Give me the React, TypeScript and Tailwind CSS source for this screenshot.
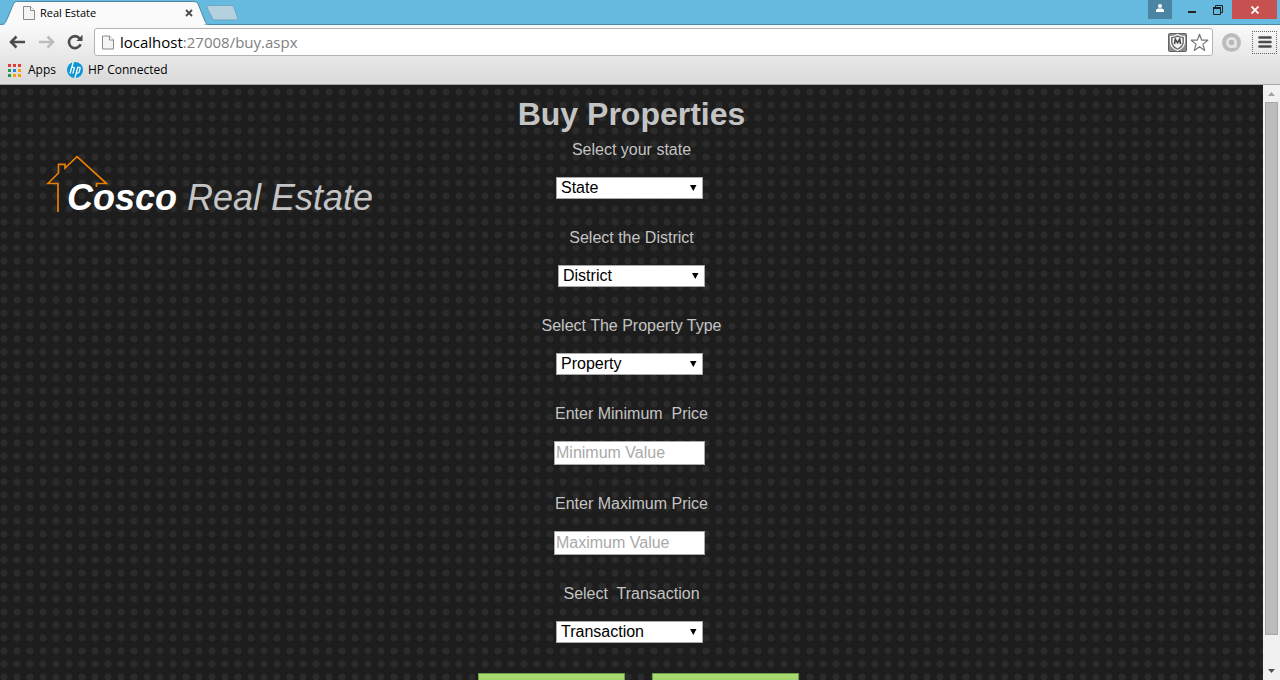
import type { ReactNode } from "react";

const uiFont = "font-['Open_Sans','Noto_Sans',sans-serif]";
const pageFont = "font-['Liberation_Sans',Arial,sans-serif]";

function PageIcon({ className }: { className: string }) {
  return (
    <svg className={className} viewBox="0 0 12 14" fill="none" aria-hidden="true">
      <path d="M1 .5h6.5l4 4v9H.5V.5z" fill="#f4f4f4" stroke="#8a8a8a" />
      <path d="M7.5.5v4h4" fill="#fff" stroke="#8a8a8a" />
    </svg>
  );
}

function TabStrip() {
  return (
    <div className="flex h-[25px] shrink-0 items-start border-b border-[#4d89a6] bg-[#66b9df]">
      <div className="relative h-[25px] w-[208px] shrink-0">
        <svg className="absolute inset-0 h-[25px] w-[208px]" viewBox="0 0 208 25" aria-hidden="true">
          <path
            d="M0 25V24.5C4 24.5 5.500 23 6.500 20.500L13 5C14 2 15.500 1.500 18 1.500H193C196 1.500 197.500 2.500 198.500 5L205 21C206 23.500 206.500 24.500 208 24.500V25z"
            fill="#fafafa"
            stroke="#4d89a6"
          />
          <path d="M5 24.500H204" stroke="#fafafa" strokeWidth="2" />
        </svg>
        <div className="relative flex h-[25px] items-center pr-3.5 pl-[23px]">
          <PageIcon className="h-3.5 w-3" />
          <span className="ml-[5px] flex-1 text-[11px] leading-4 text-black">Real Estate</span>
          <button type="button" aria-label="Close tab" className="flex size-2.5 items-center justify-center">
            <svg className="size-2" viewBox="0 0 8 8" aria-hidden="true">
              <path d="M1 1l6 6M7 1L1 7" stroke="#4c4c4c" strokeWidth="1.8" />
            </svg>
          </button>
        </div>
      </div>
      <button type="button" aria-label="New tab" className="mt-[5px] -ml-[2px]">
        <svg className="h-4 w-8" viewBox="0 0 32 16" aria-hidden="true">
          <path
            d="M3 .5H25C26.500 .5 27.300 1 28 2.500L31.300 12C31.800 14 31.500 15 30 15H10C8 15 7 14.500 6 12.500L1.200 3C.6 1.500 1 .5 3 .5z"
            fill="#b5d0df"
            stroke="#6fa6c1"
          />
        </svg>
      </button>
      <div className="ml-auto flex h-[19px] items-stretch pr-[3px]">
        <button type="button" aria-label="Profile" className="flex w-6 items-center justify-center bg-[#4a86a3]">
          <svg className="-mt-1 h-2 w-2" viewBox="0 0 8 8" aria-hidden="true">
            <circle cx="4" cy="2" r="2" fill="#fff" />
            <path d="M0 8V6.500C0 5 1.500 4.500 4 4.500S8 5 8 6.500V8z" fill="#fff" />
          </svg>
        </button>
        <button type="button" aria-label="Minimize" className="ml-2 flex w-6 items-center justify-center">
          <svg className="h-[19px] w-2" viewBox="0 0 8 19" aria-hidden="true">
            <path d="M0 11h8v2H0z" fill="#222" />
          </svg>
        </button>
        <button type="button" aria-label="Restore" className="ml-0.5 flex w-6 items-center justify-center">
          <svg className="size-2.5" viewBox="0 0 10 10" fill="none" aria-hidden="true">
            <path d="M2.500 2V.5h7v7H8" stroke="#222" />
            <path d="M.5 2.500h7v7h-7z" stroke="#222" />
            <path d="M0 3h8" stroke="#222" strokeWidth="2" />
          </svg>
        </button>
        <button type="button" aria-label="Close" className="ml-0.5 flex w-[45px] items-center justify-center bg-[#c75050]">
          <svg className="size-2" viewBox="0 0 8 8" aria-hidden="true">
            <path d="M.5 .5l7 7M7.500 .5l-7 7" stroke="#fff" strokeWidth="1.8" />
          </svg>
        </button>
      </div>
    </div>
  );
}

function Toolbar() {
  return (
    <div className="flex h-[34px] items-center pr-[3px] pl-[9px]">
      <button type="button" aria-label="Back">
        <svg className="h-4 w-4" viewBox="0 0 16 16" fill="none" aria-hidden="true">
          <path d="M2 8H16M7.500 2.500L2 8l5.500 5.500" stroke="#4c4c4c" strokeWidth="2.600" />
        </svg>
      </button>
      <button type="button" aria-label="Forward" className="ml-3.5">
        <svg className="h-4 w-4" viewBox="0 0 16 16" fill="none" aria-hidden="true">
          <path d="M0 8H14M8.500 2.500L14 8l-5.500 5.500" stroke="#bdbdbd" strokeWidth="2.600" />
        </svg>
      </button>
      <button type="button" aria-label="Reload" className="ml-3">
        <svg className="h-4 w-4" viewBox="0 0 16 16" fill="none" aria-hidden="true">
          <path d="M12.600 4.300A6 6 0 1 0 13.600 10.300" stroke="#4c4c4c" strokeWidth="2.600" />
          <path d="M15.500 .8V7H9.300z" fill="#4c4c4c" />
        </svg>
      </button>
      <div className="ml-[11px] flex h-7 flex-1 items-center rounded-[3px] border border-[#b4b4b4] bg-white pr-[3px] pl-[7px]">
        <PageIcon className="h-[15px] w-3" />
        <div className="relative ml-1.5 flex-1">
          <input
            type="text"
            aria-label="Address"
            defaultValue="localhost:27008/buy.aspx"
            className="block w-full bg-transparent text-[15px] leading-5 text-transparent outline-none"
          />
          <div className="pointer-events-none absolute inset-0 text-[15px] leading-5 text-[#808080]" aria-hidden="true">
            <span className="text-black">localhost</span>:27008/buy.aspx
          </div>
        </div>
        <button type="button" aria-label="Site security">
          <svg className="size-[19px]" viewBox="0 0 19 19" fill="none" aria-hidden="true">
            <rect x=".5" y=".5" width="18" height="18" rx="1" fill="#8b8b8b" stroke="#626262" />
            <path d="M2.500 3.500C5.500 3.500 8 2.800 9.500 1.500C11 2.800 13.500 3.500 16.500 3.500V9C16.500 13 13 16 9.500 17.500C6 16 2.500 13 2.500 9z" fill="#666" stroke="#fff" strokeWidth="1.200" />
            <path d="M4.500 5C6.500 5 8.500 4.500 9.500 3.800C10.500 4.500 12.500 5 14.500 5V9C14.500 12 12 14.200 9.500 15.500C7 14.200 4.500 12 4.500 9z" fill="#f3f3f3" />
            <path d="M6.500 11L7.300 6.200L9.500 9.800L11.700 6.200L12.500 11" stroke="#444" strokeWidth="1.600" />
          </svg>
        </button>
        <button type="button" aria-label="Bookmark this page" className="ml-[3px]">
          <svg className="size-[19px]" viewBox="0 0 19 19" aria-hidden="true">
            <path d="M9.500 1.200l2.200 6h6.100l-4.900 3.900l1.800 6.300l-5.200-3.700l-5.200 3.700l1.800-6.300L1.200 7.200h6.100z" fill="#fff" stroke="#777" strokeWidth="1.200" strokeLinejoin="round" />
          </svg>
        </button>
      </div>
      <button type="button" aria-label="Extension" className="ml-[9px]">
        <svg className="size-[19px]" viewBox="0 0 19 19" fill="none" aria-hidden="true">
          <circle cx="9.500" cy="9.500" r="7.500" fill="#e6e6e6" stroke="#bcbcbc" strokeWidth="4" />
          <circle cx="9.500" cy="9.500" r="2.800" fill="#b8b8b8" />
          <path d="M10 14.500V12.500q2.500-.5 2.500-3h2v5z" fill="#e6e6e6" />
        </svg>
      </button>
      <button type="button" aria-label="Menu" className="ml-[11px] flex h-[23px] w-[25px] items-center justify-center border border-dotted border-[#666]">
        <svg className="h-3 w-3.5" viewBox="0 0 14 12" aria-hidden="true">
          <path d="M1.500 1.500h11M1.500 6h11M1.500 10.500h11" stroke="#4c4c4c" strokeWidth="2.600" strokeLinecap="round" />
        </svg>
      </button>
    </div>
  );
}

const appDots = [
  "#e53935", "#e53935", "#e53935",
  "#1e9e4a", "#2f7de1", "#f4a300",
  "#1e9e4a", "#f4a300", "#f4a300",
];

function BookmarksBar() {
  return (
    <div className="flex h-[25px] items-center pb-[3px] pl-2 text-[12px] leading-4 text-black">
      <a href="#apps" className="flex items-center gap-[7px]">
        <svg className="size-[13px]" viewBox="0 0 13 13" aria-hidden="true">
          {appDots.map((fill, i) => (
            <rect key={i} x={(i % 3) * 5} y={Math.floor(i / 3) * 5} width="3" height="3" fill={fill} />
          ))}
        </svg>
        Apps
      </a>
      <a href="#hp" className="ml-[11px] flex items-center gap-[5px]">
        <svg className="size-4" viewBox="0 0 16 16" fill="none" aria-hidden="true">
          <circle cx="8" cy="8" r="8" fill="#0c96d6" />
          <path
            d="M6.300 0L3 11.500M4.600 5.300h1.800q1.200 0 .8 1.300L5.800 11.500M11 4.700L7.900 16M10.800 5.300h1.400q1.200 0 .9 1.300l-1 3.600q-.3 1-1.300 1H9.300"
            stroke="#fff"
            strokeWidth="1.300"
          />
        </svg>
        HP Connected
      </a>
    </div>
  );
}

function Logo() {
  return (
    <a href="#home" className="relative block pt-[25px] pl-[21px] text-[36px] leading-9 whitespace-nowrap text-[#c4c4c4] italic">
      <svg className="absolute top-0 left-0 h-[58px] w-16" viewBox="0 0 64 58" fill="none" aria-hidden="true">
        <path
          d="M12 57V28.500H2L12.500 18V9.300H19V13L31 1.700L60.500 28.500H50.500V32"
          stroke="#e87e04"
          strokeWidth="1.700"
        />
      </svg>
      <span className="relative">
        <strong className="text-white">Cosco</strong> Real Estate
      </span>
    </a>
  );
}

function Field({ id, label, children }: { id: string; label: string; children: ReactNode }) {
  return (
    <div className="flex flex-col items-center gap-[17px]">
      <label htmlFor={id} className="whitespace-pre">
        {label}
      </label>
      {children}
    </div>
  );
}

function SelectBox({ id, name, className = "" }: { id: string; name: string; className?: string }) {
  return (
    <div className={`relative w-[147px] ${className}`}>
      <select
        id={id}
        className="block h-[22px] w-full appearance-none border border-[#a9a9a9] bg-white pl-1 text-base leading-5 text-black"
      >
        <option>{name}</option>
      </select>
      <svg className="pointer-events-none absolute top-2 right-1.5 h-1.5 w-[7px]" viewBox="0 0 7 6" aria-hidden="true">
        <path d="M0 0h6.500L3.300 6z" fill="#000" />
      </svg>
    </div>
  );
}

function PriceInput({ id, placeholder }: { id: string; placeholder: string }) {
  return (
    <input
      id={id}
      type="text"
      placeholder={placeholder}
      className="mr-1 h-6 w-[151px] border border-[#a9a9a9] bg-white px-px text-base leading-5 text-black placeholder:text-[#a9a9a9]"
    />
  );
}

function Scrollbar() {
  return (
    <div className="flex w-[17px] shrink-0 flex-col items-center bg-[#f1f1f1]" aria-hidden="true">
      <svg className="size-[17px] shrink-0" viewBox="0 0 17 17">
        <path d="M5 11h7L8.500 7z" fill="#a3a3a3" />
      </svg>
      <div className="min-h-0 w-[13px] flex-1">
        <div className="h-[95%] border border-[#a8a8a8] bg-[#bcbcbc]" />
      </div>
      <svg className="size-[17px] shrink-0" viewBox="0 0 17 17">
        <path d="M5 6h7L8.500 10z" fill="#505050" />
      </svg>
    </div>
  );
}

export default function App() {
  const buttonClass =
    "h-10 w-[147px] border border-[#6aa043] bg-linear-to-b from-[#a9db72] to-[#79b846] text-base text-white";
  return (
    <div className="flex h-screen flex-col overflow-hidden">
      <header className={`shrink-0 ${uiFont}`}>
        <TabStrip />
        <div className="border-b border-[#a5a5a5] bg-linear-to-b from-[#fafafa] to-[#dcdcdc] to-90%">
          <Toolbar />
          <BookmarksBar />
        </div>
      </header>
      <div className="flex min-h-0 flex-1">
        <main
          className={`grid flex-1 grid-cols-[1fr_auto_1fr] items-start overflow-hidden bg-[#1d1d1d] bg-[radial-gradient(circle_at_4px_7px,#2b2b2b_3px,transparent_4px)] bg-[length:13px_13px] text-base leading-5 text-[#c4c4c4] ${pageFont}`}
        >
          <div className="pt-[70px] pl-[46px]">
            <Logo />
          </div>
          <form className="pt-[11px]">
            <h1 className="mb-2 text-center text-[32px] leading-9 font-bold">Buy Properties</h1>
            <div className="flex flex-col gap-[29px]">
              <Field id="state" label="Select your state">
                <SelectBox id="state" name="State" className="mr-1" />
              </Field>
              <Field id="district" label="Select the District">
                <SelectBox id="district" name="District" />
              </Field>
              <Field id="property" label="Select The Property Type">
                <SelectBox id="property" name="Property" className="mr-1" />
              </Field>
              <Field id="min" label="Enter Minimum  Price">
                <PriceInput id="min" placeholder="Minimum Value" />
              </Field>
              <Field id="max" label="Enter Maximum Price">
                <PriceInput id="max" placeholder="Maximum Value" />
              </Field>
              <Field id="transaction" label="Select  Transaction">
                <SelectBox id="transaction" name="Transaction" className="mr-1" />
              </Field>
            </div>
            <div className="mt-[30px] flex gap-[27px] pl-3.5">
              <button type="button" aria-label="Search" className={buttonClass} />
              <button type="button" aria-label="Reset" className={buttonClass} />
            </div>
          </form>
        </main>
        <Scrollbar />
      </div>
    </div>
  );
}
